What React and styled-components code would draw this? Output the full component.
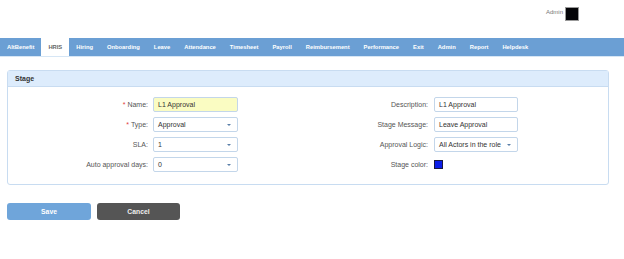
import styled, { createGlobalStyle } from "styled-components";

const GlobalStyle = createGlobalStyle`
    body {
        margin: 0;
        background: #fff;
        font-family: "Liberation Sans", Arial, sans-serif;
    }
`;

const Page = styled.div`
    width: 624px;
    height: 259px;
    background: #fff;
`;

const TopBar = styled.div`
    height: 38px;
    display: flex;
    justify-content: flex-end;
    align-items: flex-start;
    padding: 7px 45px 0 0;
    box-sizing: border-box;
    gap: 2px;
`;

const UserName = styled.span`
    font-size: 6px;
    color: #777;
    margin-top: 2px;
`;

const Avatar = styled.div`
    width: 14px;
    height: 14px;
    background: #050508;
    box-sizing: border-box;
    border: 1px solid #999;
`;

const Nav = styled.div`
    display: flex;
    height: 18px;
    background: #6b9fd4;
    border-bottom: 1px solid #d6e6f5;
`;

const Tab = styled.div`
    display: flex;
    align-items: center;
    padding: 0 7px;
    font-size: 5.8px;
    font-weight: bold;
    color: ${(p) => (p.active ? "#666" : "#fff")};
    background: ${(p) => (p.active ? "#fff" : "transparent")};
`;

const Panel = styled.div`
    margin: 13px 15px 0 7px;
    border: 1px solid #c8dcf1;
    border-radius: 3px;
`;

const PanelHeader = styled.div`
    height: 15px;
    background: #ddecfc;
    border-bottom: 1px solid #c8dcf1;
    display: flex;
    align-items: center;
    padding-left: 7px;
    font-size: 7px;
    font-weight: bold;
    color: #333;
`;

const Body = styled.div`
    display: flex;
    padding: 10px 0 12px 0;
`;

const Column = styled.div`
    width: ${(p) => p.width}px;
    display: grid;
    grid-template-columns: ${(p) => p.labelWidth}px ${(p) => p.fieldWidth}px;
    column-gap: ${(p) => p.gap}px;
    row-gap: 5px;
    align-items: center;
    align-content: start;
`;

const Label = styled.div`
    text-align: right;
    font-size: 7px;
    color: #555;
    height: 15px;
    line-height: 15px;
`;

const Star = styled.span`
    color: #e23b3b;
    margin-right: 2px;
`;

const Field = styled.div`
    height: 15px;
    box-sizing: border-box;
    border: 1px solid #c3d6ea;
    border-radius: 2px;
    background: ${(p) => (p.highlight ? "#fafcc2" : "#fff")};
    display: flex;
    align-items: center;
    justify-content: space-between;
    padding: 0 6px 0 4px;
    font-size: 7px;
    color: #333;
`;

const Arrow = styled.span`
    width: 0;
    height: 0;
    border-left: 2.5px solid transparent;
    border-right: 2.5px solid transparent;
    border-top: 2.5px solid #5a7fa8;
`;

const Swatch = styled.div`
    width: 9px;
    height: 9px;
    box-sizing: border-box;
    background: #0b1ee8;
    border: 1px solid #1a1a40;
`;

const Actions = styled.div`
    display: flex;
    gap: 6px;
    margin: 18px 0 0 7px;
`;

const Button = styled.button`
    width: ${(p) => p.width}px;
    height: 17px;
    border: none;
    border-radius: 3px;
    font-family: inherit;
    font-size: 6.8px;
    font-weight: bold;
    color: ${(p) => (p.dark ? "#eee" : "#fff")};
    background: ${(p) => (p.dark ? "#555" : "#6fa5da")};
    padding: 0;
`;

const tabs = [
    "AltBenefit", "HRIS", "Hiring", "Onboarding", "Leave", "Attendance", "Timesheet",
    "Payroll", "Reimbursement", "Performance", "Exit", "Admin", "Report", "Helpdesk",
];

const Select = ({ value }) => (
    <Field>
        <span>{value}</span>
        <Arrow />
    </Field>
);

const App = () => {
    return (
        <Page>
            <GlobalStyle />
            <TopBar>
                <UserName>Admin</UserName>
                <Avatar />
            </TopBar>
            <Nav>
                {tabs.map((t) => (
                    <Tab key={t} active={t === "HRIS"}>{t}</Tab>
                ))}
            </Nav>
            <Panel>
                <PanelHeader>Stage</PanelHeader>
                <Body>
                    <Column width={300} labelWidth={140} fieldWidth={85} gap={5}>
                        <Label><Star>*</Star>Name:</Label>
                        <Field highlight>L1 Approval</Field>
                        <Label><Star>*</Star>Type:</Label>
                        <Select value="Approval" />
                        <Label>SLA:</Label>
                        <Select value="1" />
                        <Label>Auto approval days:</Label>
                        <Select value="0" />
                    </Column>
                    <Column width={300} labelWidth={120} fieldWidth={84} gap={6}>
                        <Label>Description:</Label>
                        <Field>L1 Approval</Field>
                        <Label>Stage Message:</Label>
                        <Field>Leave Approval</Field>
                        <Label>Approval Logic:</Label>
                        <Select value="All Actors in the role" />
                        <Label>Stage color:</Label>
                        <Swatch />
                    </Column>
                </Body>
            </Panel>
            <Actions>
                <Button width={84}>Save</Button>
                <Button width={83} dark>Cancel</Button>
            </Actions>
        </Page>
    );
};

export default App;
